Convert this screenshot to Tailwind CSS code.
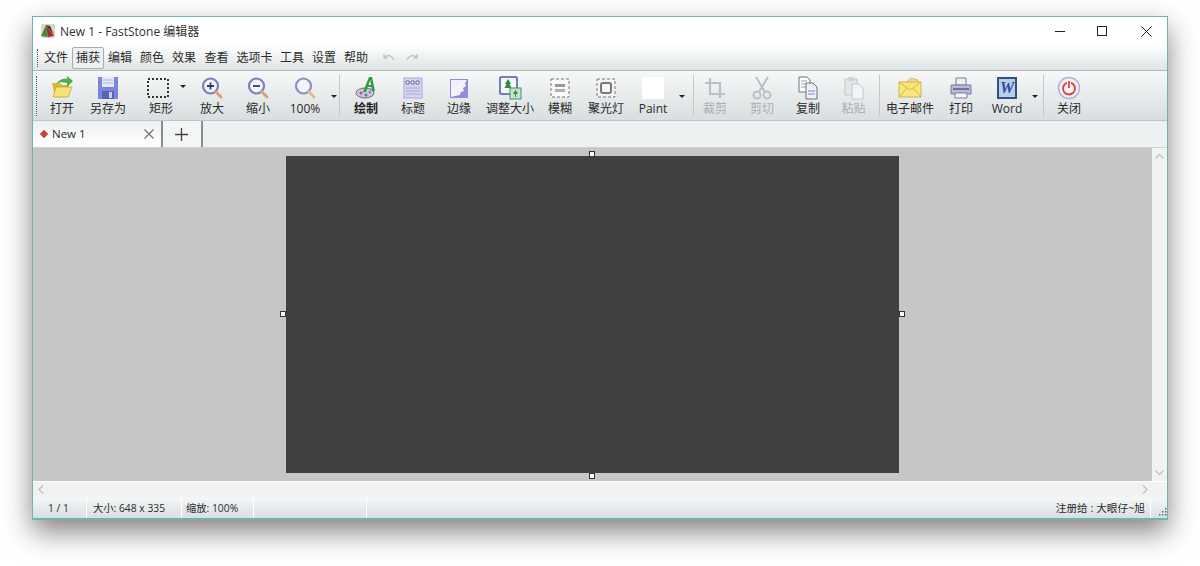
<!DOCTYPE html>
<html lang="zh-CN">
<head>
  <meta charset="UTF-8">
  <title>New 1 - FastStone 编辑器</title>
  <script src="https://cdn.jsdelivr.net/npm/@tailwindcss/browser@4"></script>
</head>
<body class="bg-white overflow-hidden h-[566px] pt-4 pl-8 text-xs text-[#2b2b2b] [font-family:'Open_Sans','Noto_Sans_CJK_SC',sans-serif]">

<div class="w-[1136px] h-[504px] flex flex-col border border-[#6db5ae] border-b-2 bg-white shadow-[0_12px_26px_rgba(40,30,30,0.55)]">

  <!-- title bar -->
  <div class="h-[28px] flex items-center shrink-0">
    <svg class="ml-[7px] w-4 h-4" viewBox="0 0 16 16">
      <rect x="1" y="1" width="14" height="14" rx="2" fill="#d9d4cc"/>
      <path d="M1 13 6 2l2 12z" fill="#3f8f3a"/>
      <path d="M6 2l8 11-6 1z" fill="#b3261e"/>
      <path d="M6 2l4 1 4 9z" fill="#3a2a20"/>
    </svg>
    <span class="ml-[4px] pt-px text-[12px] text-[#333]">New 1 - FastStone 编辑器</span>
    <div class="ml-auto flex items-center">
      <div class="w-[38px] h-[27px] flex items-center justify-center"><div class="w-[10px] h-px bg-[#222]"></div></div>
      <div class="w-[46px] h-[27px] flex items-center justify-center"><div class="w-[10px] h-[10px] border border-[#222]"></div></div>
      <div class="w-[42px] h-[27px] flex items-center justify-center">
        <svg class="w-[11px] h-[11px]" viewBox="0 0 11 11" fill="none" stroke="#222"><path d="M.5.5l10 10M10.5.5l-10 10"/></svg>
      </div>
    </div>
  </div>

  <!-- menu -->
  <div class="h-[26px] shrink-0 flex items-center pt-px bg-gradient-to-b from-white to-[#dfe4e5] border-b border-[#b4b8b9]">
    <div class="ml-[4px] w-[3px] h-[18px] border-l border-dotted border-[#555]"></div>
    <div class="w-[32px] text-center">文件</div>
    <div class="w-[32px] h-[22px] leading-[20px] text-center border border-[#a9adaf] rounded-[2px] bg-[#eef1f2]">捕获</div>
    <div class="w-[32px] text-center">编辑</div>
    <div class="w-[32px] text-center">颜色</div>
    <div class="w-[32px] text-center">效果</div>
    <div class="w-[33px] text-center">查看</div>
    <div class="w-[43px] text-center">选项卡</div>
    <div class="w-[32px] text-center">工具</div>
    <div class="w-[32px] text-center">设置</div>
    <div class="w-[32px] text-center">帮助</div>
    <svg class="ml-[11px] w-[12px] h-[10px]" viewBox="0 0 12 10" fill="none" stroke="#b9bcbe" stroke-width="1.2"><path d="M1 1v4h4M1 5c2-3 7-4 10 2"/></svg>
    <svg class="ml-[11px] w-[12px] h-[10px]" viewBox="0 0 12 10" fill="none" stroke="#b9bcbe" stroke-width="1.2"><path d="M11 1v4H7M11 5C9 2 4 1 1 7"/></svg>
  </div>

  <!-- toolbar -->
  <div class="h-[50px] shrink-0 flex items-stretch bg-gradient-to-b from-[#f7f8f8] to-[#d9dee0] border-b border-[#c0c4c5]">
    <div class="ml-[3px] mr-[2px] mt-[5px] w-[3px] h-[40px] border-l border-dotted border-[#555]"></div>

    <div class="w-[42px] flex flex-col items-center pt-[5px]">
      <svg class="w-[24px] h-[24px]" viewBox="0 0 24 24">
        <path d="M2 7h8l2 2h7v12H5z" fill="#d8b93a"/>
        <path d="M3 21l3-10h16l-4 10z" fill="#f6e27a" stroke="#c9a52e" stroke-width=".8"/>
        <path d="M6 8C9 3 14 2 17 3V0l6 5-6 6V7C13 6 9 6 6 8z" fill="#46b34a"/>
      </svg>
      <span class="mt-[1px] leading-4">打开</span>
    </div>
    <div class="w-[50px] flex flex-col items-center pt-[5px]">
      <svg class="w-[24px] h-[24px]" viewBox="0 0 24 24">
        <path d="M2 1h20v22H2z" fill="#7a86d8"/>
        <rect x="6" y="1" width="12" height="10" fill="#e4e8f6"/>
        <path d="M7 4h10M7 7h10" stroke="#aab2e2"/>
        <rect x="6" y="15" width="12" height="8" fill="#5663b8"/>
        <rect x="13" y="16" width="3" height="6" fill="#c9cef0"/>
      </svg>
      <span class="mt-[1px] leading-4">另存为</span>
    </div>
    <div class="w-[56px] relative flex flex-col items-center pt-[5px]">
      <svg class="w-[24px] h-[24px] -ml-[6px]" viewBox="0 0 24 24" fill="none" stroke="#333" stroke-width="2" stroke-dasharray="2 2"><rect x="2" y="3" width="20" height="18"/></svg>
      <span class="mt-[1px] leading-4">矩形</span>
      <div class="absolute left-[47px] top-[14px] border-x-[3px] border-x-transparent border-t-[3px] border-t-[#222]"></div>
    </div>
    <div class="w-[46px] flex flex-col items-center pt-[5px]">
      <svg class="w-[24px] h-[24px]" viewBox="0 0 24 24" fill="none">
        <circle cx="10.500" cy="10" r="7.500" stroke="#7c7fb4" stroke-width="2.200" fill="#f3f4fa"/>
        <path d="M16 16l5 5" stroke="#e0a07a" stroke-width="3" stroke-linecap="round"/>
        <path d="M7 10h7M10.500 6.500v7" stroke="#333a6a" stroke-width="1.800"/>
      </svg>
      <span class="mt-[1px] leading-4">放大</span>
    </div>
    <div class="w-[46px] flex flex-col items-center pt-[5px]">
      <svg class="w-[24px] h-[24px]" viewBox="0 0 24 24" fill="none">
        <circle cx="10.500" cy="10" r="7.500" stroke="#7c7fb4" stroke-width="2.200" fill="#f3f4fa"/>
        <path d="M16 16l5 5" stroke="#e0a07a" stroke-width="3" stroke-linecap="round"/>
        <path d="M7 10h7" stroke="#333a6a" stroke-width="1.800"/>
      </svg>
      <span class="mt-[1px] leading-4">缩小</span>
    </div>
    <div class="w-[48px] flex flex-col items-center pt-[5px]">
      <svg class="w-[24px] h-[24px]" viewBox="0 0 24 24" fill="none">
        <circle cx="10.500" cy="10" r="7.500" stroke="#8b8ebf" stroke-width="2.200" fill="#f3f4fa"/>
        <path d="M16 16l5 5" stroke="#e8b98a" stroke-width="3" stroke-linecap="round"/>
      </svg>
      <span class="mt-[1px] leading-4">100%</span>
    </div>
    <div class="w-[10px] flex justify-center pt-[24px]"><div class="h-0 border-x-[3px] border-x-transparent border-t-[3px] border-t-[#222]"></div></div>
    <div class="w-px my-[4px] bg-[#c4c8ca]"></div>

    <div class="w-[52px] flex flex-col items-center pt-[5px]">
      <svg class="w-[24px] h-[24px]" viewBox="0 0 24 24">
        <ellipse cx="11" cy="17" rx="9" ry="5" fill="#c9c7d6" stroke="#6a6a78"/>
        <circle cx="7" cy="17" r="1.500" fill="#b04a9a"/><circle cx="12" cy="19" r="1.500" fill="#4a7ab0"/><circle cx="16" cy="16" r="1.500" fill="#a77ec9"/>
        <path d="M9 16 15 1h3l3 14h-3l-.7-4h-3.600L12 16zM14.500 9H17l-.8-5z" fill="#2f9a3f"/>
      </svg>
      <span class="mt-[1px] leading-4 font-semibold text-[#222]">绘制</span>
    </div>
    <div class="w-[42px] flex flex-col items-center pt-[5px]">
      <svg class="w-[24px] h-[24px]" viewBox="0 0 24 24">
        <rect x="3" y="2" width="18" height="20" fill="#d6d4f2" stroke="#a9a7dc"/>
        <path d="M5 5h3v3H5zM10 5h3v3h-3zM15 5h3v3h-3z" fill="#fff" stroke="#4a4a7a" stroke-width=".8"/>
        <path d="M5 12h14M5 15h14M5 18h14" stroke="#a8a6d8"/>
      </svg>
      <span class="mt-[1px] leading-4">标题</span>
    </div>
    <div class="w-[50px] flex flex-col items-center pt-[5px]">
      <svg class="w-[24px] h-[24px]" viewBox="0 0 24 24">
        <rect x="3" y="3" width="18" height="19" fill="#8f8cd8"/>
        <path d="M4 4h16l-2 3 1 3-3 2 1 3-3 1-1 3-5 1-4 1z" fill="#f3f2fb"/>
      </svg>
      <span class="mt-[1px] leading-4">边缘</span>
    </div>
    <div class="w-[52px] flex flex-col items-center pt-[5px]">
      <svg class="w-[24px] h-[24px]" viewBox="0 0 24 24">
        <rect x="2" y="1" width="17" height="17" rx="1" fill="#f4f6f7" stroke="#4a5aa8" stroke-width="1.500"/>
        <path d="M10 3l3 5h-1.500l2 4h-7l2-4H7z" fill="#2f8a3a"/>
        <rect x="12" y="12" width="11" height="11" fill="#bfe6c4" stroke="#4a8a8a"/>
        <path d="M17.500 14l2.500 4h-5zM17 18h1v3h-1z" fill="#2f8a3a"/>
      </svg>
      <span class="mt-[1px] leading-4">调整大小</span>
    </div>
    <div class="w-[48px] flex flex-col items-center pt-[5px]">
      <svg class="w-[24px] h-[24px]" viewBox="0 0 24 24">
        <rect x="3" y="3" width="18" height="18" fill="#fafafa" stroke="#777" stroke-dasharray="3 2"/>
        <path d="M7 8h10v3H7z" fill="#9a9a9a"/><path d="M7 13h10v3H7z" fill="#b0b0b0"/>
      </svg>
      <span class="mt-[1px] leading-4">模糊</span>
    </div>
    <div class="w-[44px] flex flex-col items-center pt-[5px]">
      <svg class="w-[24px] h-[24px]" viewBox="0 0 24 24">
        <rect x="3" y="3" width="18" height="18" fill="#f2f3f3" stroke="#777" stroke-dasharray="3 2"/>
        <rect x="7" y="7" width="10" height="10" rx="2" fill="#f8f8f8" stroke="#777" stroke-width="2"/>
      </svg>
      <span class="mt-[1px] leading-4">聚光灯</span>
    </div>
    <div class="w-[50px] flex flex-col items-center pt-[5px]">
      <div class="w-[24px] h-[24px] p-[1px]"><div class="w-[22px] h-[22px] bg-white"></div></div>
      <span class="mt-[1px] leading-4">Paint</span>
    </div>
    <div class="w-[15px] pl-[1px] pt-[24px]"><div class="h-0 w-0 border-x-[3px] border-x-transparent border-t-[3px] border-t-[#222]"></div></div>
    <div class="w-px my-[4px] bg-[#c4c8ca]"></div>

    <div class="w-[42px] flex flex-col items-center pt-[5px]">
      <svg class="w-[24px] h-[24px]" viewBox="0 0 24 24" fill="none" stroke="#bcc0c2" stroke-width="2.200"><path d="M7 2v16h15M2 7h15v15"/></svg>
      <span class="mt-[1px] leading-4 text-[#a9adaf]">裁剪</span>
    </div>
    <div class="w-[52px] flex flex-col items-center pt-[5px]">
      <svg class="w-[24px] h-[24px]" viewBox="0 0 24 24" fill="none" stroke="#bcc0c2" stroke-width="2"><path d="M6 1l9 15M18 1L9 16"/><circle cx="7" cy="19" r="3.500"/><circle cx="17" cy="19" r="3.500"/></svg>
      <span class="mt-[1px] leading-4 text-[#a9adaf]">剪切</span>
    </div>
    <div class="w-[40px] flex flex-col items-center pt-[5px]">
      <svg class="w-[24px] h-[24px]" viewBox="0 0 24 24">
        <path d="M3 1h8l3 3v12H3z" fill="#fff" stroke="#6c7080"/>
        <path d="M5 5h6M5 8h6M5 11h6" stroke="#9a9dab"/>
        <path d="M10 7h7l4 4v12H10z" fill="#eef0f6" stroke="#6c7080"/>
        <path d="M12 15h7M12 18h7" stroke="#7f83c0"/>
      </svg>
      <span class="mt-[1px] leading-4">复制</span>
    </div>
    <div class="w-[51px] flex flex-col items-center pt-[5px]">
      <svg class="w-[24px] h-[24px]" viewBox="0 0 24 24">
        <path d="M3 3h12v16H3z" fill="#e4e6e8" stroke="#c4c7ca"/>
        <rect x="6" y="1" width="6" height="4" fill="#d2d5d8"/>
        <path d="M10 8h7l4 4v11H10z" fill="#f2f3f4" stroke="#c4c7ca"/>
      </svg>
      <span class="mt-[1px] leading-4 text-[#a9adaf]">粘贴</span>
    </div>
    <div class="w-px my-[4px] bg-[#c4c8ca]"></div>

    <div class="w-[60px] flex flex-col items-center pt-[5px]">
      <svg class="w-[24px] h-[24px]" viewBox="0 0 24 24">
        <path d="M13 2l7 2-1 4H6z" fill="#f0d9a0" stroke="#c9973f" stroke-width=".6"/>
        <rect x="1" y="6" width="22" height="15" fill="#f6e77c" stroke="#cda93a" stroke-width=".8"/>
        <path d="M1 6l11 8 11-8M1 21l8-9M23 21l-8-9" fill="none" stroke="#cda93a" stroke-width=".8"/>
      </svg>
      <span class="mt-[1px] leading-4">电子邮件</span>
    </div>
    <div class="w-[42px] flex flex-col items-center pt-[5px]">
      <svg class="w-[24px] h-[24px]" viewBox="0 0 24 24">
        <path d="M7 2h10v7H7z" fill="#eef0f4" stroke="#7a7e96"/>
        <path d="M2 9h20v9H2z" fill="#b8bad8" stroke="#7a7e96"/>
        <path d="M4 13h16" stroke="#6f729a" stroke-width="2"/>
        <path d="M6 17h12v5H6z" fill="#f4f5f8" stroke="#7a7e96"/>
      </svg>
      <span class="mt-[1px] leading-4">打印</span>
    </div>
    <div class="w-[50px] flex flex-col items-center pt-[5px]">
      <svg class="w-[24px] h-[24px]" viewBox="0 0 24 24">
        <rect x="2" y="1" width="20" height="22" fill="#35507f"/>
        <rect x="4" y="3" width="16" height="18" fill="#b9cdec"/>
        <text x="12" y="17" text-anchor="middle" font-size="16" font-weight="700" font-style="italic" fill="#2a4f9e" font-family="Liberation Serif">W</text>
      </svg>
      <span class="mt-[1px] leading-4">Word</span>
    </div>
    <div class="w-[11px] pt-[24px]"><div class="h-0 w-0 border-x-[3px] border-x-transparent border-t-[3px] border-t-[#222]"></div></div>
    <div class="w-px my-[4px] bg-[#c4c8ca]"></div>
    <div class="w-[50px] flex flex-col items-center pt-[5px]">
      <svg class="w-[24px] h-[24px]" viewBox="0 0 24 24" fill="none">
        <circle cx="12" cy="12" r="10.500" fill="#f2eef6" stroke="#b7b0d8" stroke-width="1.500"/>
        <circle cx="12" cy="12.500" r="6" stroke="#d8473d" stroke-width="1.800"/>
        <path d="M12 4.500v7" stroke="#f2eef6" stroke-width="4"/>
        <path d="M12 5v7" stroke="#d8473d" stroke-width="1.800"/>
      </svg>
      <span class="mt-[1px] leading-4">关闭</span>
    </div>
  </div>

  <!-- tabs -->
  <div class="h-[27px] shrink-0 flex items-stretch bg-[#eef1f1] border-b border-[#d0d3d4]">
    <div class="w-[130px] flex items-center pl-[8px] pr-[7px] bg-gradient-to-b from-[#eef1f1] to-white border-r-2 border-[#8a8d8f]">
      <div class="w-[6px] h-[6px] rotate-45 bg-[#c8413b]"></div>
      <span class="ml-[5px] text-[11.500px]">New 1</span>
      <svg class="ml-auto w-[10px] h-[10px]" viewBox="0 0 10 10" fill="none" stroke="#777" stroke-width="1.300"><path d="M.5.5l9 9M9.500.5l-9 9"/></svg>
    </div>
    <div class="w-[40px] flex items-center justify-center pr-[2px] border-r-2 border-[#8a8d8f] bg-[#f4f6f6]">
      <svg class="w-[13px] h-[13px]" viewBox="0 0 13 13" fill="none" stroke="#444" stroke-width="1.300"><path d="M6.500 0v13M0 6.500h13"/></svg>
    </div>
  </div>

  <!-- canvas + vertical scrollbar -->
  <div class="flex-1 flex min-h-0">
    <div class="flex-1 bg-[#c6c6c6] flex items-center justify-center">
      <div class="relative w-[613px] h-[317px] bg-[#404040]">
        <div class="absolute left-[303px] -top-[5px] w-[6px] h-[6px] bg-white border border-[#333]"></div>
        <div class="absolute -left-[6px] top-[155px] w-[6px] h-[6px] bg-white border border-[#333]"></div>
        <div class="absolute -right-[6px] top-[155px] w-[6px] h-[6px] bg-white border border-[#333]"></div>
        <div class="absolute left-[303px] -bottom-[6px] w-[6px] h-[6px] bg-white border border-[#333]"></div>
      </div>
    </div>
    <div class="w-[15px] bg-[#f1f2f2] flex flex-col items-center justify-between py-[5px]">
      <svg class="w-[9px] h-[6px]" viewBox="0 0 9 6" fill="none" stroke="#c2c4c5" stroke-width="1.500"><path d="M.5 5.500l4-4 4 4"/></svg>
      <svg class="w-[9px] h-[6px]" viewBox="0 0 9 6" fill="none" stroke="#c2c4c5" stroke-width="1.500"><path d="M.5.5l4 4 4-4"/></svg>
    </div>
  </div>

  <!-- horizontal scrollbar -->
  <div class="h-[16px] shrink-0 bg-[#f1f2f2] flex items-center justify-between pl-[5px] pr-[19px] border-t border-white">
    <svg class="w-[6px] h-[9px]" viewBox="0 0 6 9" fill="none" stroke="#c2c4c5" stroke-width="1.500"><path d="M5 .5l-4 4 4 4"/></svg>
    <svg class="w-[6px] h-[9px]" viewBox="0 0 6 9" fill="none" stroke="#c2c4c5" stroke-width="1.500"><path d="M1 .5l4 4-4 4"/></svg>
  </div>

  <!-- status bar -->
  <div class="h-[21px] shrink-0 flex items-stretch text-[10.300px] bg-gradient-to-b from-[#f6f7f7] to-[#d8dfe3]">
    <div class="w-[54px] pr-[2px] text-center leading-[22px] border-r border-white">1 / 1</div>
    <div class="w-[95px] pl-[6px] leading-[22px] border-r border-white">大小: 648 x 335</div>
    <div class="w-[72px] pl-[4px] leading-[22px] border-r border-white">缩放: 100%</div>
    <div class="w-[113px] border-r border-white"></div>
    <div class="flex-1 text-right pr-[5px] leading-[22px] text-[10.700px]">注册给 : 大眼仔~旭</div>
    <div class="w-[17px] border-l border-white relative">
      <svg class="absolute right-0 bottom-0 w-[10px] h-[10px]" viewBox="0 0 10 10" fill="#667"><path d="M8 0h1.500v1.500H8zM5 3h1.500v1.500H5zM8 3h1.500v1.500H8zM2 6h1.500v1.500H2zM5 6h1.500v1.500H5zM8 6h1.500v1.500H8z"/></svg>
    </div>
  </div>
</div>
</body>
</html>
